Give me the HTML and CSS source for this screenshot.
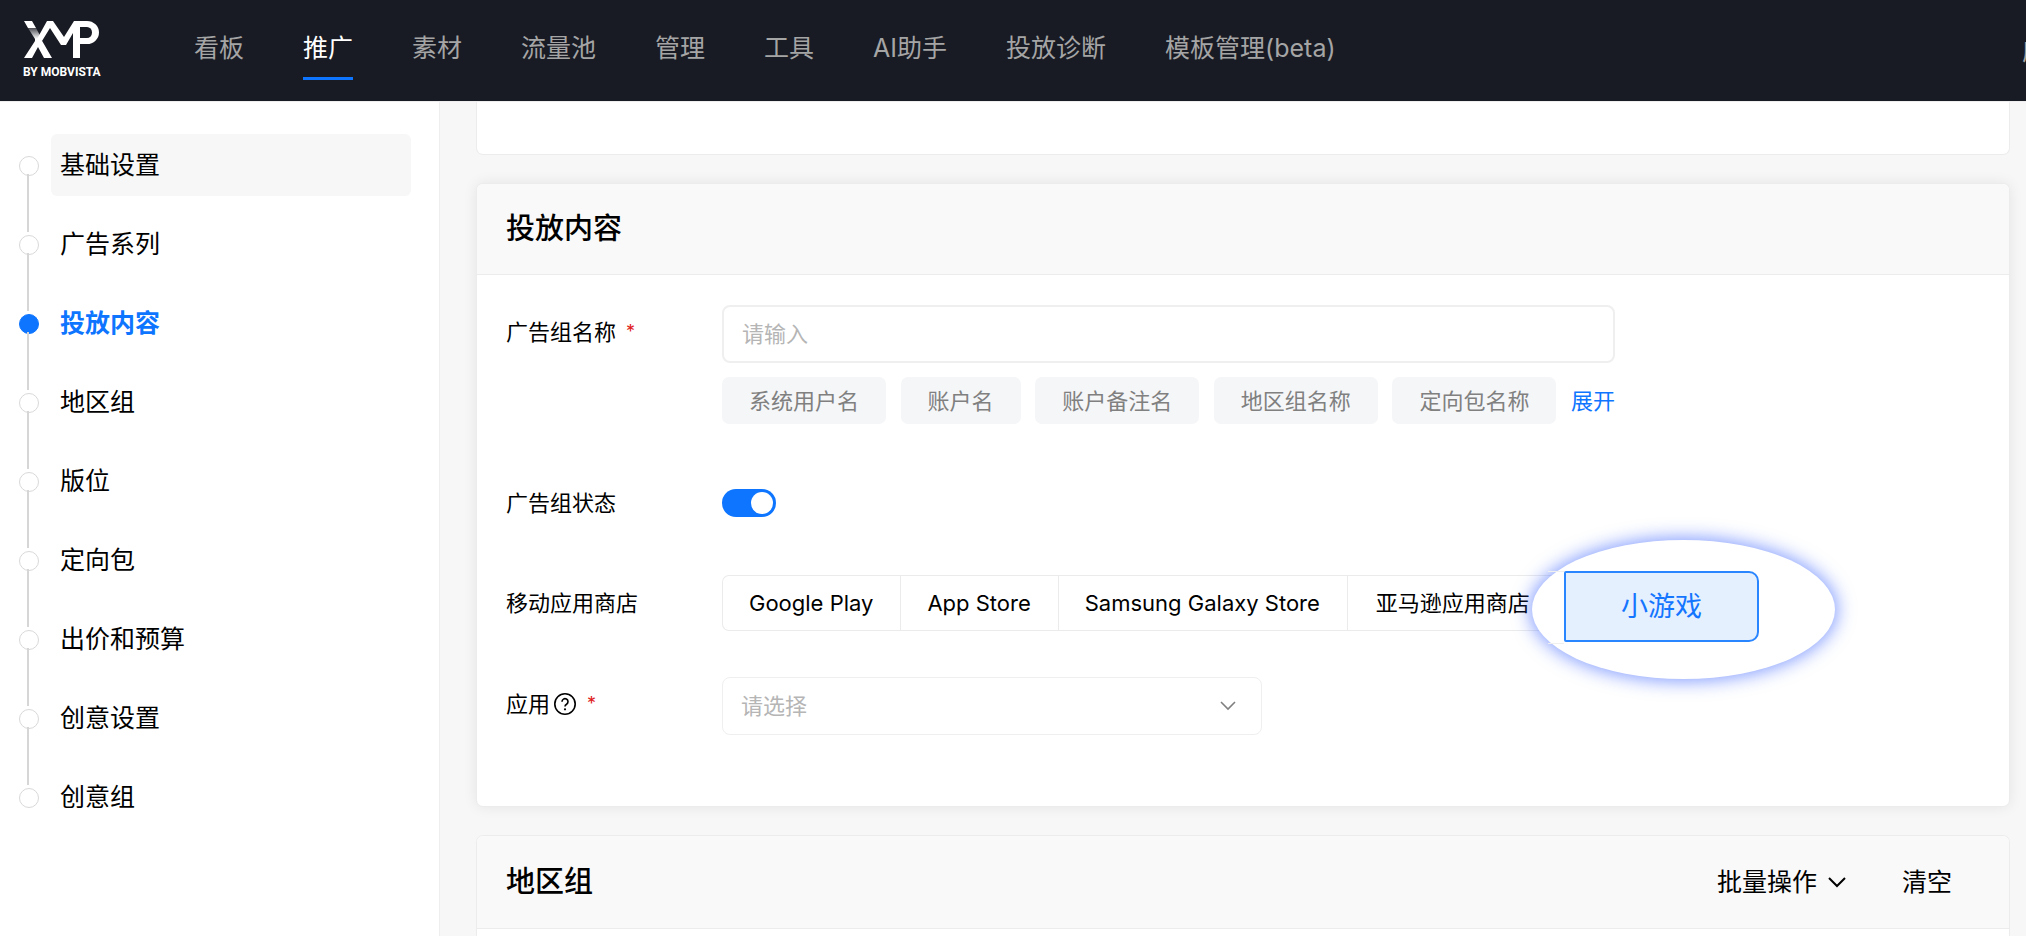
FILE: index.html
```
<!DOCTYPE html>
<html lang="zh-CN">
<head>
<meta charset="utf-8">
<title>XMP 推广</title>
<link rel="stylesheet" href="styles.css">
</head>
<body>
<header class="topbar">
  <a class="logo" href="#" aria-label="XMP">
    <svg class="logo-mark" viewBox="0 0 78 38" width="78" height="38" aria-hidden="true">
      <defs>
        <linearGradient id="fade" x1="0" y1="0" x2="0" y2="1">
          <stop offset="0" stop-color="#4a4c52"/>
          <stop offset="1" stop-color="#fff"/>
        </linearGradient>
      </defs>
      <path fill="#fff" d="M1 0h8l4 7H5zM17 18h-5v2L1 37h8l6-11 6 11h8L18 18z"/>
      <path fill="url(#fade)" d="M5 7h8l6 11h-7z"/>
      <path fill="#fff" d="M14 18 24 0h6l11 16L51 0h13a12 11.500 0 0 1 0 23h-7v14h-7V12l-7 12h-5L27 7l-8 13z"/>
      <path fill="#181b23" d="M57 6h7a5 5.500 0 0 1 0 11h-7z"/>
    </svg>
    <span class="logo-sub">BY MOBVISTA</span>
  </a>
  <nav class="nav">
    <a class="nav-link" href="#">看板</a>
    <a class="nav-link active" href="#">推广</a>
    <a class="nav-link" href="#">素材</a>
    <a class="nav-link" href="#">流量池</a>
    <a class="nav-link" href="#">管理</a>
    <a class="nav-link" href="#">工具</a>
    <a class="nav-link" href="#">AI助手</a>
    <a class="nav-link" href="#">投放诊断</a>
    <a class="nav-link" href="#">模板管理(beta)</a>
  </nav>
  <a class="nav-more" href="#">应</a>
</header>
<div class="layout">
  <aside class="sidebar">
    <ol class="steps">
      <li class="step hovered"><a href="#">基础设置</a></li>
      <li class="step"><a href="#">广告系列</a></li>
      <li class="step current"><a href="#">投放内容</a></li>
      <li class="step"><a href="#">地区组</a></li>
      <li class="step"><a href="#">版位</a></li>
      <li class="step"><a href="#">定向包</a></li>
      <li class="step"><a href="#">出价和预算</a></li>
      <li class="step"><a href="#">创意设置</a></li>
      <li class="step"><a href="#">创意组</a></li>
    </ol>
  </aside>
  <main class="content">
    <section class="card card-tail"></section>
    <section class="card card-focus">
      <div class="card-head"><h2>投放内容</h2></div>
      <form class="form">
        <div class="row row-name">
          <label class="label" for="name">广告组名称<span class="req">*</span></label>
          <div class="name-field">
            <input class="text-input" id="name" type="text" placeholder="请输入">
            <div class="tags">
              <button class="tag" type="button">系统用户名</button>
              <button class="tag" type="button">账户名</button>
              <button class="tag" type="button">账户备注名</button>
              <button class="tag" type="button">地区组名称</button>
              <button class="tag" type="button">定向包名称</button>
              <a class="expand" href="#">展开</a>
            </div>
          </div>
        </div>
        <div class="row row-status">
          <label class="label" for="status">广告组状态</label>
          <input class="switch" id="status" type="checkbox" role="switch" checked>
        </div>
        <div class="row row-store">
          <span class="label" id="store-label">移动应用商店</span>
          <div class="stores" role="group" aria-labelledby="store-label">
            <button class="store" type="button">Google Play</button>
            <button class="store" type="button">App Store</button>
            <button class="store" type="button">Samsung Galaxy Store</button>
            <button class="store" type="button">亚马逊应用商店</button>
            <div class="lens"><button class="store-picked" type="button">小游戏</button></div>
          </div>
        </div>
        <div class="row row-app">
          <label class="label" for="app">应用<svg class="help" viewBox="0 0 24 24" width="24" height="24" aria-hidden="true"><circle cx="12" cy="12" r="10.200"/><path d="M9 9.700a3 3 0 1 1 4.600 2.500c-1.100.7-1.600 1.200-1.600 2.300"/><circle class="dot" cx="12" cy="17.300" r="1.100"/></svg><span class="req">*</span></label>
          <div class="select-wrap">
            <select class="select" id="app"><option>请选择</option></select>
            <svg class="select-caret" viewBox="0 0 16 16" width="16" height="16" aria-hidden="true"><path d="M1 4l7 7 7-7"/></svg>
          </div>
        </div>
      </form>
    </section>
    <section class="card card-next">
      <div class="card-head">
        <h2>地区组</h2>
        <div class="actions">
          <button class="action" type="button">批量操作<svg class="caret" viewBox="0 0 18 18" width="18" height="18" aria-hidden="true"><path d="M1 5l8 8 8-8"/></svg></button>
          <button class="action" type="button">清空</button>
        </div>
      </div>
    </section>
  </main>
</div>
</body>
</html>
```

FILE: styles.css
```
* { box-sizing: border-box; }

body {
  margin: 0;
  height: 100vh;
  display: flex;
  flex-direction: column;
  overflow: hidden;
  background: #f7f7f7;
  color: #000;
  font-family: Inter, "Noto Sans CJK SC", sans-serif;
  font-size: 22px;
  line-height: 32px;
}

a { color: inherit; text-decoration: none; }

button, input, select {
  margin: 0;
  font: inherit;
  color: inherit;
}

button { cursor: pointer; white-space: nowrap; }

/* Top bar */
.topbar {
  flex: none;
  display: flex;
  align-items: center;
  height: 101px;
  padding: 0 0 3px 23px;
  background: #181b23;
  color: #a5a5a6;
  font-size: 25px;
  overflow: hidden;
}

.logo {
  display: flex;
  flex-direction: column;
  gap: 7px;
  width: 171px;
  color: #fff;
}

.logo-mark { display: block; }

.logo-sub {
  font: 700 12px/12px Roboto, sans-serif;
  white-space: nowrap;
}

.nav { display: flex; gap: 59px; }

.nav-link {
  padding: 12px 0 11px;
  border-bottom: 3px solid transparent;
  line-height: 36px;
  white-space: nowrap;
}

.nav-link.active { color: #fff; border-color: #0d75ff; }

.nav-more {
  margin-left: auto;
  padding-top: 4px;
  width: 4px;
  overflow: hidden;
  white-space: nowrap;
}

/* Layout */
.layout { flex: 1; display: flex; min-height: 0; border-top: 1px solid #eee; }

.sidebar {
  flex: none;
  width: 440px;
  padding: 32px 28px 0 19px;
  background: #fff;
  border-right: 1px solid #eee;
}

.steps {
  display: flex;
  flex-direction: column;
  gap: 17px;
  margin: 0;
  padding: 0;
  list-style: none;
  font-size: 25px;
}

.step { position: relative; padding-left: 32px; }

.step a {
  display: block;
  padding: 13px 9px;
  border-radius: 6px;
  line-height: 36px;
}

.step.hovered a { background: #f7f7f7; }

.step.current a { color: #0d75ff; font-weight: 700; }

.step::before {
  content: "";
  position: absolute;
  left: 0;
  top: 22px;
  width: 18px;
  height: 18px;
  border: 1px solid #d9d9d9;
  border-radius: 50%;
  background: #fff;
}

.step.current::before { background: #0d75ff; border-color: #0d75ff; }

.step:not(:last-child)::after {
  content: "";
  position: absolute;
  left: 8px;
  top: 40px;
  width: 2px;
  height: 58px;
  background: #d6d6d6;
}

/* Cards */
.content {
  flex: 1;
  display: flex;
  flex-direction: column;
  gap: 28px;
  min-width: 0;
  padding: 0 16px 0 36px;
}

.card {
  flex: none;
  background: #fff;
  border: 1px solid #ececec;
  border-radius: 7px;
}

.card-tail {
  height: 53px;
  border-top: 0;
  border-radius: 0 0 7px 7px;
}

.card-focus { box-shadow: 0 0 14px rgba(0, 0, 0, 0.08); }

.card-next {
  flex: 1;
  border-bottom: 0;
  border-radius: 7px 7px 0 0;
}

.card-head {
  display: flex;
  align-items: center;
  justify-content: space-between;
  height: 91px;
  padding: 0 57px 0 29px;
  background: #f9f9f9;
  border-bottom: 1px solid #ececec;
  border-radius: 6px 6px 0 0;
}

.card-next .card-head { height: 93px; }

.card-head h2 { margin: 0; font-size: 29px; font-weight: 500; }

.actions { display: flex; gap: 56px; }

.action {
  display: flex;
  align-items: center;
  gap: 11px;
  padding: 0;
  border: 0;
  background: none;
  font-size: 25px;
}

.caret, .select-caret, .help { fill: none; stroke: currentColor; stroke-width: 2; }

/* Form */
.form { padding: 30px 29px 71px; }

.row { display: grid; grid-template-columns: 216px minmax(0, 1fr); }

.row-status { align-items: center; margin-top: 63px; }
.row-store { align-items: center; margin-top: 56px; }
.row-app { margin-top: 46px; }

.label { display: flex; align-items: center; }
.row-name .label, .row-app .label { height: 54px; }

.req { margin-left: 10px; color: #e02020; font-size: 18px; }

.name-field { width: 893px; }

.text-input, .select {
  display: block;
  width: 100%;
  height: 58px;
  padding: 0 18px;
  border: 2px solid #efefef;
  border-radius: 8px;
  background: #fff;
}

.text-input::placeholder { color: #b5b5b5; opacity: 1; }

.tags {
  display: flex;
  align-items: center;
  justify-content: space-between;
  margin-top: 14px;
}

.tag {
  height: 47px;
  padding: 0 27px;
  border: 0;
  border-radius: 7px;
  background: #f5f6f8;
  color: #808080;
}

.expand { color: #0d75ff; }

.switch {
  appearance: none;
  display: flex;
  justify-content: flex-end;
  align-items: center;
  width: 54px;
  height: 28px;
  padding: 0 3px;
  border-radius: 14px;
  background: #0d75ff;
}

.switch::before {
  content: "";
  width: 22px;
  height: 22px;
  border-radius: 50%;
  background: #fff;
}

.stores { position: relative; display: flex; width: max-content; }

.store {
  height: 56px;
  padding: 0 27px 0 26px;
  border: 1px solid #ebebeb;
  border-right-width: 0;
  background: #fff;
}

.store:first-child { border-radius: 7px 0 0 7px; }
.store:last-of-type { padding-left: 28px; }

/* Magnified option lying over the end of the group */
.lens {
  position: absolute;
  left: 810px;
  top: -35px;
  display: flex;
  align-items: flex-start;
  width: 303px;
  height: 139px;
  padding: 31px 0 0 16px;
  border-radius: 50%;
  background: #fff;
  box-shadow: 0 0 18px 2px rgba(60, 100, 255, 0.65);
}

.lens::before {
  content: "";
  width: 16px;
  height: 71px;
  border: solid #efefef;
  border-width: 1px 0;
}

.store-picked {
  width: 195px;
  height: 71px;
  border: 2px solid #2a86ff;
  border-radius: 2px 10px 10px 2px;
  background: #e5f0ff;
  color: #1475ff;
  font-size: 27px;
}

.help { margin-left: 3px; stroke-width: 1.6; }
.help .dot { fill: currentColor; stroke: none; }

.select-wrap { position: relative; width: 540px; }

.select {
  appearance: none;
  border-width: 1px;
  color: #b5b5b5;
}

.select-caret {
  position: absolute;
  right: 26px;
  top: 21px;
  color: #808080;
  stroke-width: 1.6;
  pointer-events: none;
}
```
